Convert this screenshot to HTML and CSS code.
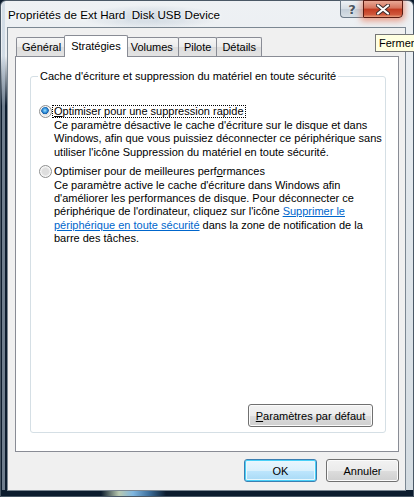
FILE: index.html
```html
<!DOCTYPE html>
<html>
<head>
  <meta charset="utf-8">
  <link rel="stylesheet" href="styles.css">
</head>

<body>
<div class="window">
  <div class="titlebar">
    <span class="title">Propriétés de Ext Hard&nbsp; Disk USB Device</span>
    <div class="caption">
      <span class="cap help">?</span>
      <span class="cap close">
        <svg width="14" height="11" viewBox="0 0 14 11">
          <path d="M2 1.5 L12 9.5 M12 1.5 L2 9.5" stroke="#3a2a2a" stroke-width="4" stroke-linecap="round"/>
          <path d="M2 1.5 L12 9.5 M12 1.5 L2 9.5" stroke="#fff" stroke-width="2.2" stroke-linecap="round"/>
        </svg>
      </span>
    </div>
  </div>

  <div class="client">
    <div class="tabs">
      <span class="tab">Général</span>
      <span class="tab active">Stratégies</span>
      <span class="tab">Volumes</span>
      <span class="tab">Pilote</span>
      <span class="tab">Détails</span>
    </div>

    <div class="panel">
      <div class="group">
        <span class="legend">Cache d'écriture et suppression du matériel en toute sécurité</span>

        <div class="option first">
          <span class="radio checked"></span>
          <span class="label focus"><u>O</u>ptimiser pour une suppression rapide</span>
        </div>
        <p class="desc">Ce paramètre désactive le cache d'écriture sur le disque et dans<br>
          Windows, afin que vous puissiez déconnecter ce périphérique sans<br>
          utiliser l'icône Suppression du matériel en toute sécurité.</p>

        <div class="option">
          <span class="radio"></span>
          <span class="label">Optimiser pour de meilleures perf<u>o</u>rmances</span>
        </div>
        <p class="desc">Ce paramètre active le cache d'écriture dans Windows afin<br>
          d'améliorer les performances de disque. Pour déconnecter ce<br>
          périphérique de l'ordinateur, cliquez sur l'icône <a href="#">Supprimer le<br>
          périphérique en toute sécurité</a> dans la zone de notification de la<br>
          barre des tâches.</p>

        <div class="group-foot">
          <button class="btn wide"><u>P</u>aramètres par défaut</button>
        </div>
      </div>
    </div>

    <div class="footer">
      <button class="btn default">OK</button>
      <button class="btn">Annuler</button>
    </div>
  </div>

  <div class="tooltip">Fermer</div>
</div>
</body>
</html>
```

FILE: styles.css
```css
* {
  margin: 0;
  padding: 0;
  box-sizing: border-box;
}
html, body {
  width: 414px;
  height: 497px;
  overflow: hidden;
}
body {
  font-family: "Liberation Sans", Arial, sans-serif;
  font-size: 11px;
  color: #000;
  background: #0c1c2e;
}

/* glass frame */
.window {
  position: relative;
  width: 414px;
  height: 497px;
  display: flex;
  flex-direction: column;
  padding: 0 7px 5px 6px;
  border: 1px solid #4a5866;
  border-radius: 6px 6px 0 0;
  background:
    linear-gradient(90deg, #0c1c2e 0 100px, #b9c9b0 118px, #7fb6e0 132px, #3d6f9c 148px, #0c1c2e 165px) left bottom / 100% 6px no-repeat,
    linear-gradient(90deg, transparent 1px, rgba(190,205,220,.55) 1px 4px, transparent 4px) left top / 6px 100% no-repeat,
    linear-gradient(180deg, rgba(12,28,46,0) 55px, #0c1c2e 105px) left top / 6px 100% no-repeat,
    radial-gradient(ellipse 70px 12px at 150px 16px, rgba(110,140,170,.3), transparent),
    linear-gradient(180deg, #eef1f4, #e1e7ec 40%, #d3dbe1);
}
.titlebar {
  height: 26px;
  display: flex;
  justify-content: space-between;
  align-items: flex-start;
}
.title {
  font-size: 11.6px;
  line-height: 27px;
  padding-left: 1px;
  color: #000;
  text-shadow: 0 0 6px #fff, 0 0 3px #fff;
}
.caption {
  display: flex;
  margin-right: 3px;
  margin-top: -1px;
}
.cap {
  height: 18px;
  display: flex;
  align-items: center;
  justify-content: center;
}
.help {
  width: 23px;
  border: 1px solid #6d7b88;
  border-right: none;
  border-radius: 0 0 0 4px;
  background: linear-gradient(180deg, #eef2f5, #d5dde4 50%, #c3ced8 51%, #d8e0e6);
  font: bold 13px "DejaVu Sans", sans-serif;
  color: #4b5560;
  text-shadow: 0 0 2px #fff;
}
.close {
  width: 40px;
  border: 1px solid #5a1b12;
  border-radius: 0 0 4px 0;
  background: linear-gradient(180deg, #e9a996, #d5735c 45%, #c23a20 50%, #d0583c 85%, #e8a080);
  box-shadow: 0 1px 6px 2px rgba(230, 90, 50, .55);
}

/* client area */
.client {
  flex: 1;
  display: flex;
  flex-direction: column;
  border: 1px solid #7b8792;
  background: #f0f0f0;
  padding: 7px 6px 0 7px;
}
.tabs {
  display: flex;
  height: 21px;
  padding-left: 1px;
  position: relative;
  z-index: 1;
}
.tab {
  margin-top: 2px;
  height: 19px;
  padding: 0 5px;
  line-height: 18px;
  border: 1px solid #898c95;
  border-bottom: none;
  margin-right: -1px;
  border-radius: 2px 2px 0 0;
  background: linear-gradient(180deg, #f6f6f6, #ebebeb 50%, #dddddd 51%, #e3e3e3);
}
.tab.active {
  margin-top: 0;
  height: 22px;
  padding: 0 6px;
  margin-left: -2px;
  margin-right: -3px;
  line-height: 20px;
  background: #fff;
  position: relative;
  z-index: 2;
}
.panel {
  height: 396px;
  border: 1px solid #898c95;
  background: #fff;
  padding: 19px 12px 18px 14px;
  display: flex;
  flex-direction: column;
}
.group {
  flex: 1;
  border: 1px solid #d5dfe5;
  border-radius: 3px;
  padding: 0 12px 5px 8px;
  display: flex;
  flex-direction: column;
}
.legend {
  align-self: flex-start;
  margin: -7px 0 0 -1px;
  padding: 0 2px;
  line-height: 13px;
  background: #fff;
}
.option {
  display: flex;
  align-items: center;
  height: 13px;
  margin-top: 6px;
}
.option.first {
  margin-top: 22px;
}
.radio {
  width: 13px;
  height: 13px;
  border-radius: 50%;
  border: 1px solid #8e8f8f;
  background: radial-gradient(circle at 50% 50%, #dedede 0 3px, #f2f2f2 5px, #e4e4e4 6px);
  box-shadow: inset 0 0 0 1px #f8f8f8;
}
.radio.checked {
  background:
    radial-gradient(circle at 45% 40%, #9ee0ff 0, #3c9ae0 2px, #175ea8 3.5px, transparent 4px),
    radial-gradient(circle, #dedede 0 3px, #f2f2f2 5px, #e4e4e4 6px);
}
.label {
  padding: 0 1px;
  line-height: 11px;
  border: 1px solid transparent;
}
.label.focus {
  border: 1px dotted #000;
}
.desc {
  margin: 1px 0 0 15px;
  line-height: 13.3px;
  white-space: nowrap;
}
.desc a {
  color: #0066cc;
}
.group-foot {
  margin-top: auto;
  display: flex;
  justify-content: flex-end;
}

/* buttons */
.btn {
  font: inherit;
  color: #000;
  height: 23px;
  width: 73px;
  border: 1px solid #707070;
  border-radius: 3px;
  background: linear-gradient(180deg, #f2f2f2, #ebebeb 50%, #dddddd 51%, #cfcfcf);
  box-shadow: inset 0 0 0 1px #fbfbfb;
}
.btn.wide {
  width: 125px;
}
.btn.default {
  border-color: #3c7fb1;
  background: linear-gradient(180deg, #eaf6fd, #d9f0fc 50%, #bee6fd 51%, #a7d9f5);
  box-shadow: inset 0 0 0 1px #48d0f8, inset 0 0 0 2px #e8f7fd;
}
.footer {
  display: flex;
  justify-content: flex-end;
  gap: 9px;
  margin-top: 7px;
}

.tooltip {
  position: absolute;
  left: 374px;
  top: 33px;
  width: 50px;
  height: 18px;
  padding: 2px 0 0 3px;
  font-size: 11px;
  background: #ffffe1;
  border: 1px solid #767676;
  z-index: 5;
}
```
